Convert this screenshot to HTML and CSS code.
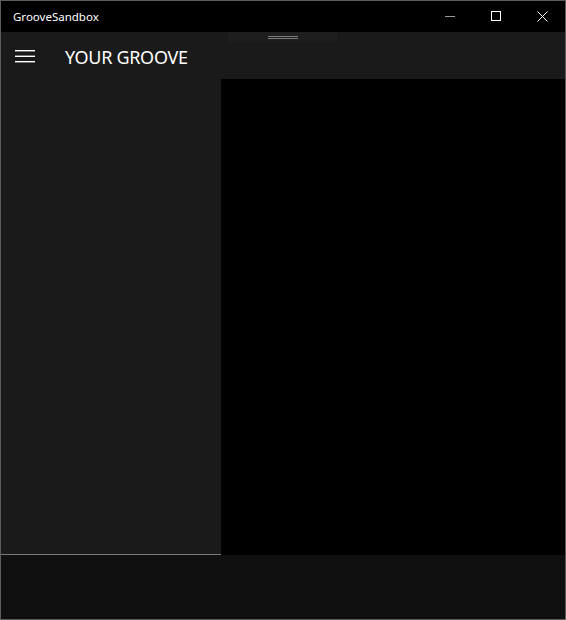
FILE: index.html
```html
<!DOCTYPE html>
<html>
<head>
<meta charset="utf-8">
<link rel="stylesheet" href="styles.css">
</head>
<body>
<div class="window">
  <div class="titlebar">
    <span class="title">GrooveSandbox</span>
    <div class="caption">
      <span class="cap-btn"><svg width="11" height="11" viewBox="0 0 11 11"><rect x="0" y="5" width="10" height="1" fill="#999"/></svg></span>
      <span class="cap-btn"><svg width="11" height="11" viewBox="0 0 11 11"><rect x="0.5" y="0.5" width="9" height="9" fill="none" stroke="#fff" stroke-width="1"/></svg></span>
      <span class="cap-btn"><svg width="11" height="11" viewBox="0 0 11 11"><path d="M0.5 0.5 L10.5 10.5 M10.5 0.5 L0.5 10.5" stroke="#fff" stroke-width="1"/></svg></span>
    </div>
  </div>
  <div class="header">
    <span class="hamburger"><svg width="20" height="13" viewBox="0 0 20 13"><rect x="0" y="0" width="20" height="1.4" fill="#fff"/><rect x="0" y="5.6" width="20" height="1.4" fill="#fff"/><rect x="0" y="11" width="20" height="1.4" fill="#fff"/></svg></span>
    <span class="heading">YOUR GROOVE</span>
    <div class="grip"><span class="grip-line"></span><span class="grip-line"></span></div>
  </div>
  <div class="main">
    <div class="pane"></div>
    <div class="content"></div>
  </div>
  <div class="footer"></div>
</div>
</body>
</html>
```
FILE: styles.css
```css
html, body { margin: 0; padding: 0; background: #000; }
.window {
  width: 566px; height: 620px; box-sizing: border-box;
  border: 1px solid #5c5c5c;
  display: flex; flex-direction: column;
  font-family: "Noto Sans", "Open Sans", sans-serif;
  color: #fff;
  overflow: hidden;
}
.titlebar {
  height: 31px; background: #000; display: flex; align-items: center;
  flex: none;
}
.title { font-size: 11.5px; margin-left: 12px; margin-top: -1px; }
.caption { margin-left: auto; display: flex; }
.cap-btn { width: 46px; height: 31px; display: flex; align-items: center; justify-content: center; }
.cap-btn svg { display: block; }
.header {
  height: 47px; background: #1a1a1a; display: flex; align-items: center; flex: none;
  position: relative;
}
.hamburger { margin-left: 14px; width: 20px; height: 13px; margin-top: 1px; }
.hamburger svg { display: block; }
.heading { font-size: 18px; margin-left: 30px; margin-top: 2px; letter-spacing: -0.3px; }
.grip {
  position: absolute; left: 227px; top: 0; width: 109px; height: 10px;
  background: #1e1e1e; display: flex; flex-direction: column; align-items: center;
  padding-top: 4px; box-sizing: border-box; gap: 1px;
}
.grip-line { width: 30px; height: 1px; background: #7a7a7a; }
.main { flex: none; height: 476px; display: flex; }
.pane { width: 220px; background: #1a1a1a; border-bottom: 1px solid #7a7a7a; height: 475px; }
.content { flex: 1; background: #000; }
.footer { flex: 1; background: #0f0f0f; }
```
